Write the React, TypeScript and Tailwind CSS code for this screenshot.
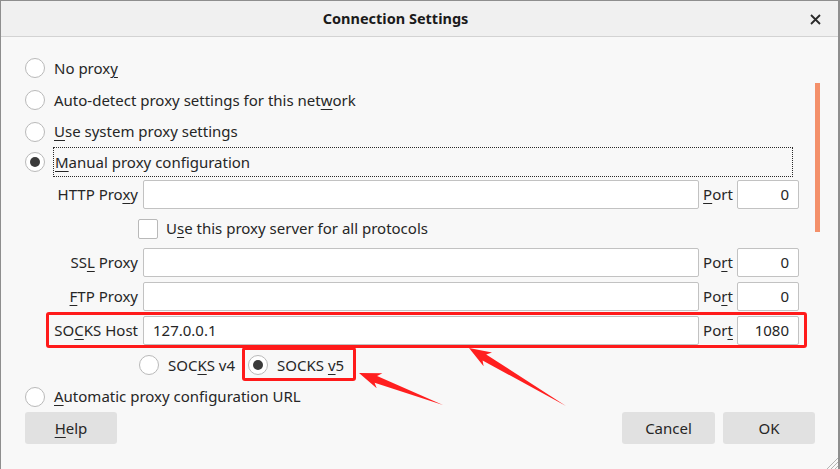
import type { ReactNode } from "react";

// mnemonic label: underline one letter
function Mn({ text, at }: { text: string; at: number }) {
  return (
    <span>
      {text.slice(0, at)}
      <span className="underline decoration-1 underline-offset-[3px]">{text.charAt(at)}</span>
      {text.slice(at + 1)}
    </span>
  );
}

function Radio({ checked }: { checked?: boolean }) {
  return (
    <span className="w-[20px] h-[20px] rounded-full border border-[#b9b9b9] bg-white flex items-center justify-center shrink-0">
      {checked && <span className="w-[10px] h-[10px] rounded-full bg-[#3a3a3a]" />}
    </span>
  );
}

function RadioRow({ children, checked, h = "h-[31px]" }: { children: ReactNode; checked?: boolean; h?: string }) {
  return (
    <div className={`${h} flex items-center gap-[9px]`}>
      <Radio checked={checked} />
      {children}
    </div>
  );
}

function ProxyRow({
  label,
  portLabel,
  value = "",
  port,
}: {
  label: ReactNode;
  portLabel: ReactNode;
  value?: string;
  port: string;
}) {
  return (
    <div className="h-[29px] flex items-stretch">
      <div className="w-[96px] pr-[5px] flex items-center justify-end whitespace-nowrap">{label}</div>
      <div className="w-[556px] bg-white border border-[#c2c2c2] rounded-[2px] flex items-center pl-[9px]">
        {value}
      </div>
      <div className="w-[38px] flex items-center justify-center">{portLabel}</div>
      <div className="w-[62px] bg-white border border-[#c2c2c2] rounded-[2px] flex items-center justify-end pr-[9px]">
        {port}
      </div>
    </div>
  );
}

export default function App() {
  return (
    <div
      className="relative w-[840px] h-[469px] overflow-hidden bg-[#f8f8f8] border-l border-t border-r-2 border-[#8e8e8e] text-[15px] text-[#262626]"
      style={{ fontFamily: '"Noto Sans", "Open Sans", sans-serif' }}
    >
      {/* Title bar */}
      <div className="relative h-[36px] bg-[#f0f0f0] border-b border-[#d3d3d3] flex items-center justify-center pr-[48px]">
        <span className="font-bold text-[14.5px] text-[#1a1a1a]">Connection Settings</span>
        <svg
          className="absolute right-[17px] top-[13px] w-[11px] h-[11px]"
          viewBox="0 0 11 11"
          stroke="#2a2a2a"
          strokeWidth={1.8}
        >
          <path d="M1 1l9 9M10 1l-9 9" />
        </svg>
      </div>

      {/* Body */}
      <div className="flex flex-col pl-[24px] pt-[15px]">
        <RadioRow h="h-[32px]">
          <Mn text="No proxy" at={7} />
        </RadioRow>
        <RadioRow h="h-[32px]">
          <Mn text="Auto-detect proxy settings for this network" at={39} />
        </RadioRow>
        <RadioRow h="h-[31px]">
          <Mn text="Use system proxy settings" at={0} />
        </RadioRow>
        <RadioRow checked h="h-[30px]">
          <div className="w-[740px] h-[30px] -ml-[1px] pl-[1px] border border-dotted border-[#2a2a2a] flex items-center">
            <Mn text="Manual proxy configuration" at={0} />
          </div>
        </RadioRow>

        <div className="flex flex-col pl-[22px] pt-[3px]">
          <ProxyRow
            label={<Mn text="HTTP Proxy" at={8} />}
            portLabel={<Mn text="Port" at={0} />}
            port="0"
          />
          <div className="h-[39px] flex items-center gap-[8px] pl-[91px]">
            <span className="w-[20px] h-[20px] rounded-[2px] border border-[#b9b9b9] bg-white" />
            <Mn text="Use this proxy server for all protocols" at={1} />
          </div>
          <div className="flex flex-col gap-[5px]">
            <ProxyRow
              label={<Mn text="SSL Proxy" at={2} />}
              portLabel={<Mn text="Port" at={2} />}
              port="0"
            />
            <ProxyRow
              label={<Mn text="FTP Proxy" at={0} />}
              portLabel={<Mn text="Port" at={2} />}
              port="0"
            />
            <div className="relative">
              <ProxyRow
                label={<Mn text="SOCKS Host" at={2} />}
                portLabel={<Mn text="Port" at={3} />}
                value="127.0.0.1"
                port="1080"
              />
              <div className="absolute -left-[1px] -top-[4px] w-[761px] h-[36px] border-[3px] border-[#ff1a1a] rounded-[3px]" />
            </div>
          </div>
          <div className="h-[40px] flex items-center pl-[92px]">
            <div className="flex items-center gap-[9px]">
              <Radio />
              <Mn text="SOCKS v4" at={3} />
            </div>
            <div className="relative flex items-center gap-[9px] ml-[13px]">
              <Radio checked />
              <Mn text="SOCKS v5" at={6} />
              <div className="absolute -left-[6px] -top-[7px] w-[114px] h-[34px] border-[3px] border-[#ff1a1a] rounded-[3px]" />
            </div>
          </div>
        </div>

        <div className="-mt-[4px]">
          <RadioRow>
            <Mn text="Automatic proxy configuration URL" at={0} />
          </RadioRow>
        </div>

        {/* Buttons */}
        <div className="flex items-center pr-[23px]">
          <button className="w-[92px] h-[32px] bg-[#e1e1e1] rounded-[3px]">
            <Mn text="Help" at={0} />
          </button>
          <div className="flex-1" />
          <button className="w-[93px] h-[32px] bg-[#e1e1e1] rounded-[3px]">Cancel</button>
          <button className="w-[92px] h-[32px] bg-[#e1e1e1] rounded-[3px] ml-[8px]">OK</button>
        </div>
      </div>

      {/* scrollbar */}
      <div className="absolute left-[814px] top-[82px] w-[5px] h-[149px] bg-[#f4906a]" />

      {/* annotation arrows + resize grip */}
      <svg className="absolute left-0 top-0 w-[840px] h-[469px] pointer-events-none" viewBox="0 0 840 469">
        <polygon
          fill="#ff1f1f"
          points="468,347 491,351.6 485.2,353.4 565,405 481.6,359.4 482.6,365.2"
        />
        <polygon
          fill="#ff1f1f"
          points="358,372 381.4,372.3 376.1,375.1 442,404 373.6,381.7 375.7,387.3"
        />
        <g stroke="#b5b5b5" strokeWidth={1}>
          <path d="M826 468L838 456M830 468L838 460M834 468L838 464" />
        </g>
      </svg>
    </div>
  );
}
